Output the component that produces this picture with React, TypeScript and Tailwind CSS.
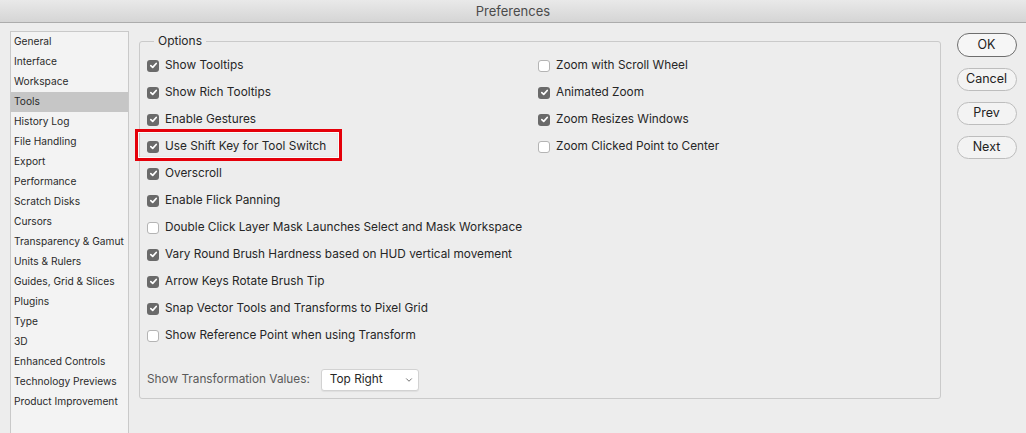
import { ChevronDown } from 'lucide-react'

type TOption = {
    label: string,
    checked: boolean,
    marked?: boolean
}

const sections = [
    'General', 'Interface', 'Workspace', 'Tools', 'History Log', 'File Handling', 'Export',
    'Performance', 'Scratch Disks', 'Cursors', 'Transparency & Gamut', 'Units & Rulers',
    'Guides, Grid & Slices', 'Plugins', 'Type', '3D', 'Enhanced Controls',
    'Technology Previews', 'Product Improvement',
]

const leftOptions: TOption[] = [
    { label: 'Show Tooltips', checked: true },
    { label: 'Show Rich Tooltips', checked: true },
    { label: 'Enable Gestures', checked: true },
    { label: 'Use Shift Key for Tool Switch', checked: true, marked: true },
    { label: 'Overscroll', checked: true },
    { label: 'Enable Flick Panning', checked: true },
    { label: 'Double Click Layer Mask Launches Select and Mask Workspace', checked: false },
    { label: 'Vary Round Brush Hardness based on HUD vertical movement', checked: true },
    { label: 'Arrow Keys Rotate Brush Tip', checked: true },
    { label: 'Snap Vector Tools and Transforms to Pixel Grid', checked: true },
    { label: 'Show Reference Point when using Transform', checked: false },
]

const rightOptions: TOption[] = [
    { label: 'Zoom with Scroll Wheel', checked: false },
    { label: 'Animated Zoom', checked: true },
    { label: 'Zoom Resizes Windows', checked: true },
    { label: 'Zoom Clicked Point to Center', checked: false },
]

function Check({ checked }: { checked: boolean }) {
    if (!checked) {
        return <div className='size-[12px] shrink-0 rounded-[3px] border border-[#b4b4b4] bg-white' />
    }
    return (
        <div className='size-[12px] shrink-0 rounded-[3px] bg-[#6a6a6a] flex items-center justify-center'>
            <svg width='9' height='9' viewBox='0 0 9 9' fill='none'>
                <path d='M1.8 4.6 L3.7 6.4 L7.2 2.5' stroke='white' strokeWidth='1.7' strokeLinecap='round' strokeLinejoin='round' />
            </svg>
        </div>
    )
}

function OptionRow({ option }: { option: TOption }) {
    return (
        <div className='relative h-[27px] flex items-center gap-x-[6px]'>
            {option.marked && (
                <div className='absolute -left-[12px] top-[-4px] w-[207px] h-[32px] border-[3px] border-[#e5000a]'>
                    <div className='size-full border border-[#fbfbfb] shadow-[inset_0_0_2px_rgba(0,0,0,0.08)]' />
                </div>
            )}
            <Check checked={option.checked} />
            <span className='relative text-[11.8px] text-[#262626] whitespace-nowrap'>{option.label}</span>
        </div>
    )
}

function NavButton({ title, primary }: { title: string, primary?: boolean }) {
    return (
        <button className={primary
            ? 'w-[60px] h-[24px] rounded-full border border-[#6e6e6e] bg-[#f6f6f6] text-[12.5px] text-[#222]'
            : 'w-[60px] h-[23px] rounded-full border border-[#bdbdbd] bg-[#f3f3f3] text-[12.5px] text-[#222]'}>
            {title}
        </button>
    )
}

export default function App() {
    return (
        <div className='w-[1026px] h-[433px] overflow-hidden bg-[#ededed] flex flex-col font-["Inter","Liberation_Sans",sans-serif]'>
            <div className='h-[23px] shrink-0 bg-gradient-to-b from-[#e9e9e9] to-[#d5d5d5] border-b border-[#acacac] flex items-center justify-center pt-[1px]'>
                <span className='text-[13px] text-[#4b4b4b]'>Preferences</span>
            </div>

            <div className='flex flex-1 min-h-0 pl-[10px] pt-[8px]'>
                <div className='w-[119px] shrink-0 border border-[#c9c9c9] bg-[#f3f3f3] h-[440px]'>
                    {sections.map((s, i) => (
                        <div key={i} className={s === 'Tools'
                            ? 'h-[20px] flex items-center px-[3px] bg-[#c6c6c6] text-[10.2px] text-[#2a2a2a] whitespace-nowrap'
                            : 'h-[20px] flex items-center px-[3px] text-[10.2px] text-[#2a2a2a] whitespace-nowrap'}>
                            {s}
                        </div>
                    ))}
                </div>

                <fieldset className='ml-[10px] mt-[2px] w-[802px] h-[366px] border border-[#cacaca] rounded-[3px] px-0 pb-0 m-0 pt-0'>
                    <legend className='ml-[14px] px-[4px] text-[12px] text-[#262626] leading-[16px]'>Options</legend>
                    <div className='flex pl-[7px] pt-[3px]'>
                        <div className='w-[391px] flex flex-col'>
                            {leftOptions.map((o, i) => <OptionRow key={i} option={o} />)}
                            <div className='mt-[20px] h-[22px] flex items-center gap-x-[11px]'>
                                <span className='text-[11.8px] text-[#5a5a5a]'>Show Transformation Values:</span>
                                <div className='w-[98px] h-[22px] bg-white border border-[#d2d2d2] rounded-[3px] shadow-[0_1px_1px_rgba(0,0,0,0.06)] flex items-center justify-between pl-[8px] pr-[4px]'>
                                    <span className='text-[11.8px] text-[#262626]'>Top Right</span>
                                    <ChevronDown size={10} strokeWidth={2} color='#555' />
                                </div>
                            </div>
                        </div>
                        <div className='flex flex-col'>
                            {rightOptions.map((o, i) => <OptionRow key={i} option={o} />)}
                        </div>
                    </div>
                </fieldset>

                <div className='flex-1 flex flex-col items-center pt-[2px] pl-[6px] gap-y-[11px]'>
                    <NavButton title='OK' primary />
                    <NavButton title='Cancel' />
                    <NavButton title='Prev' />
                    <NavButton title='Next' />
                </div>
            </div>
        </div>
    )
}
